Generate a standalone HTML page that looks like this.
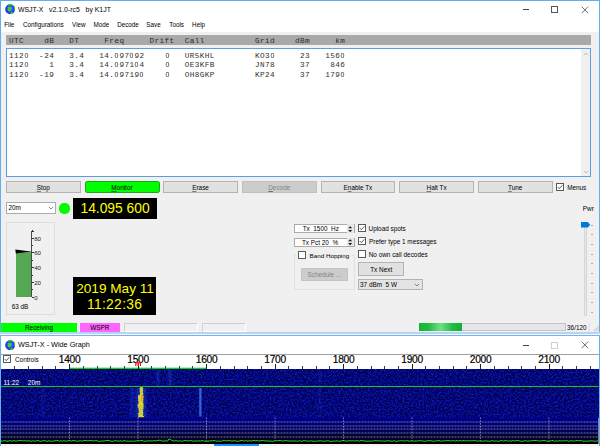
<!DOCTYPE html>
<html><head><meta charset="utf-8"><title>WSJT-X</title><style>
html,body{margin:0;padding:0;}
body{width:600px;height:446px;overflow:hidden;background:#f0f0f0;position:relative;font-family:"Liberation Sans", "DejaVu Sans", sans-serif;font-size:6.35px;color:#000;}
.a{position:absolute;}
.t{position:absolute;white-space:pre;line-height:10px;height:10px;}
.btn{position:absolute;box-sizing:border-box;background:#e1e1e1;border:0.7px solid #b4b4b4;}
.mono{font-family:"Liberation Mono", "DejaVu Sans Mono", monospace;font-size:7.7px;letter-spacing:0.405px;white-space:pre;position:absolute;left:9px;line-height:9.25px;height:9.25px;color:#303030;}
.mono i{font-style:normal;font-family:"Liberation Sans", "DejaVu Sans", sans-serif;display:inline-block;width:5.025px;letter-spacing:0;text-align:center;font-size:7.4px;transform:scaleX(0.96);}
.cb{position:absolute;box-sizing:border-box;width:8.4px;height:8.4px;background:#fff;border:0.7px solid #5a5a5a;}
.sp{position:absolute;box-sizing:border-box;background:#fff;border:0.7px solid #9a9a9a;}
u{text-decoration:underline;text-decoration-thickness:1px;text-underline-offset:0.5px;text-decoration-color:rgba(0,0,0,0.45);}
</style></head><body>
<div class="a" style="left:0;top:0;width:600px;height:335px;background:#f0f0f0;"></div>
<div class="a" style="left:0;top:0;width:600px;height:31.5px;background:#fff;"></div>
<div class="a" style="left:0;top:0;width:600px;height:0.75px;background:#66adeb;"></div>
<div class="a" style="left:0;top:0;width:0.9px;height:332px;background:#66adeb;"></div>
<div class="a" style="left:599.1px;top:0;width:0.9px;height:332px;background:#66adeb;"></div>
<div class="a" style="left:0;top:332px;width:600px;height:2px;background:#b6d5f1;"></div><div class="a" style="left:0;top:334px;width:600px;height:1px;background:#f2f7fd;"></div>
<svg class="a" style="left:4.9px;top:4.3px" width="10.4" height="10.4" viewBox="-0.2 -0.2 10.4 10.4"><defs><radialGradient id="gg" cx="0.55" cy="0.5" r="0.55"><stop offset="0" stop-color="#5868ff"/><stop offset="0.6" stop-color="#3434ff"/><stop offset="1" stop-color="#2c2cf0"/></radialGradient><clipPath id="gc"><circle cx="5" cy="5" r="5"/></clipPath></defs><circle cx="5" cy="5" r="5" fill="url(#gg)"/><g clip-path="url(#gc)" fill="#22e022"><path d="M2.3 3.3 L3.1 2.4 L4.2 2.9 L5.2 2.4 L6.5 3 L6.6 4.1 L5.9 5.5 L5.2 6.7 L4 7.3 L3 6.8 L2.3 5.6 L2.5 4.4Z"/><path d="M3 0.9 Q5.5 -1 8 1.2 Q5.5 0.7 3 0.9Z" stroke="#22e022" stroke-width="0.7"/><path d="M8.7 1.8 Q11 4 9.6 6.4 Q9.2 4 8.7 1.8Z" stroke="#22e022" stroke-width="0.5"/><ellipse cx="6.4" cy="8.7" rx="1.5" ry="1"/></g></svg>
<div class="t" style="left:18.00px;top:5.07px;font-size:6.92px;">WSJT-X   v2.1.0-rc5   by K1JT</div>
<div class="a" style="left:522.6px;top:9.1px;width:6.6px;height:0.8px;background:#444;"></div>
<div class="a" style="left:551.2px;top:6.2px;width:6.8px;height:6.8px;box-sizing:border-box;border:0.8px solid #555;"></div>
<svg class="a" style="left:580.6px;top:6px" width="8" height="8" viewBox="0 0 8 8"><path d="M0.6 0.6L7.2 7.2M7.2 0.6L0.6 7.2" stroke="#333" stroke-width="0.7" fill="none"/></svg>
<div class="t" style="left:4.22px;top:20.06px;font-size:6.30px;">File</div>
<div class="t" style="left:23.06px;top:20.06px;font-size:6.30px;">Configurations</div>
<div class="t" style="left:72.10px;top:20.06px;font-size:6.30px;">View</div>
<div class="t" style="left:93.62px;top:20.06px;font-size:6.30px;">Mode</div>
<div class="t" style="left:117.14px;top:20.06px;font-size:6.30px;">Decode</div>
<div class="t" style="left:146.37px;top:20.06px;font-size:6.30px;">Save</div>
<div class="t" style="left:169.25px;top:20.06px;font-size:6.30px;">Tools</div>
<div class="t" style="left:192.10px;top:20.06px;font-size:6.30px;">Help</div>
<div class="a" style="left:6px;top:35.3px;width:584.6px;height:10.1px;background:#a9a9a9;"></div>
<div class="mono" style="top:37.4px;color:#2a2a2a;">UTC    dB   DT     Freq     Drift  Call          Grid    dBm     km</div>
<div class="a" style="left:6px;top:48px;width:584.5px;height:129px;box-sizing:border-box;background:#fff;border:0.9px solid #5a9fe0;"></div>
<div class="a" style="left:581px;top:49px;width:8.6px;height:127px;background:#f0f0f0;"></div>
<svg class="a" style="left:582.5px;top:52px" width="6" height="4" viewBox="0 0 6 4"><path d="M0.8 3.2L3 1L5.2 3.2" stroke="#b0b0b0" stroke-width="0.8" fill="none"/></svg>
<svg class="a" style="left:582.5px;top:170px" width="6" height="4" viewBox="0 0 6 4"><path d="M0.8 0.8L3 3L5.2 0.8" stroke="#b0b0b0" stroke-width="0.8" fill="none"/></svg>
<div class="mono" style="top:51.40px;">112<i>0</i>  -24   3.4   14.<i>0</i>97<i>0</i>92    <i>0</i>   UR5KHL        KO3<i>0</i>     23   156<i>0</i></div>
<div class="mono" style="top:60.40px;">112<i>0</i>    1   3.4   14.<i>0</i>971<i>0</i>4    <i>0</i>   OE3KFB        JN78     37    846</div>
<div class="mono" style="top:69.90px;">112<i>0</i>  -19   3.4   14.<i>0</i>9719<i>0</i>    <i>0</i>   OH8GKP        KP24     37   179<i>0</i></div>
<div class="btn" style="left:5.90px;top:181.4px;width:74.7px;height:12px;"></div>
<div class="t" style="left:36.67px;top:183.26px;font-size:6.40px;"><u>S</u>top</div>
<div class="btn" style="left:84.6px;top:181px;width:75.3px;height:12.4px;background:#00ff00;border:1px solid #22a022;border-radius:2.2px;"></div>
<div class="t" style="left:111.25px;top:183.26px;font-size:6.40px;"><u>M</u>onitor</div>
<div class="btn" style="left:163.24px;top:181.4px;width:74.7px;height:12px;"></div>
<div class="t" style="left:192.23px;top:183.26px;font-size:6.40px;"><u>E</u>rase</div>
<div class="btn" style="left:241.91px;top:181.4px;width:74.7px;height:12px;background:#cccccc;border-color:#bfbfbf;"></div>
<div class="t" style="left:268.23px;top:183.26px;font-size:6.40px;color:#838383;"><u>D</u>ecode</div>
<div class="btn" style="left:320.58px;top:181.4px;width:74.7px;height:12px;"></div>
<div class="t" style="left:343.58px;top:183.26px;font-size:6.40px;">E<u>n</u>able Tx</div>
<div class="btn" style="left:399.25px;top:181.4px;width:74.7px;height:12px;"></div>
<div class="t" style="left:426.52px;top:183.26px;font-size:6.40px;"><u>H</u>alt Tx</div>
<div class="btn" style="left:477.92px;top:181.4px;width:74.7px;height:12px;"></div>
<div class="t" style="left:508.09px;top:183.26px;font-size:6.40px;"><u>T</u>une</div>
<div class="cb" style="left:556.2px;top:183.3px;width:7.9px;height:7.9px;"></div><svg class="a" style="left:556.2px;top:183.3px" width="7.9" height="7.9" viewBox="0 0 8.4 8.4"><path d="M1.8 4.3L3.5 6L6.8 2.4" stroke="#222" stroke-width="0.8" fill="none"/></svg>
<div class="t" style="left:567.14px;top:183.26px;font-size:6.40px;">Menus</div>
<div class="sp" style="left:6px;top:202px;width:50px;height:11.7px;border-color:#acacac;"></div>
<div class="t" style="left:8.50px;top:203.46px;font-size:6.40px;">20m</div>
<svg class="a" style="left:47.5px;top:206px" width="6" height="4" viewBox="0 0 6 4"><path d="M0.8 0.8L3 3L5.2 0.8" stroke="#555" stroke-width="0.7" fill="none"/></svg>
<div class="a" style="left:59.2px;top:202.6px;width:11px;height:11px;border-radius:44%;background:#00ff00;"></div>
<div class="a" style="left:73px;top:197.5px;width:83.7px;height:21.3px;background:#000;"></div>
<div class="t" style="left:80.50px;top:203.74px;font-size:13.80px;color:#ffff00;">14.095 600</div>
<div class="a" style="left:6.3px;top:222px;width:49px;height:93px;box-sizing:border-box;border:0.75px solid #dcdcdc;"></div>
<div class="a" style="left:16px;top:250.5px;width:15.2px;height:46.3px;background:#54a854;"></div>
<svg class="a" style="left:15.4px;top:248px" width="17" height="6" viewBox="0 0 17 6"><path d="M0.3 1.6L15.5 3.6L0.8 5.4Z" fill="#000"/></svg>
<div class="a" style="left:31px;top:231px;width:0.8px;height:66.3px;background:#4a4a4a;"></div>
<div class="a" style="left:31.6px;top:296.65px;width:2.4px;height:0.7px;background:#333;"></div>
<div class="t" style="left:34.20px;top:292.66px;font-size:6.10px;color:#222;">0</div>
<div class="a" style="left:31.6px;top:289.27px;width:1.6px;height:0.7px;background:#333;"></div>
<div class="a" style="left:31.6px;top:281.90px;width:2.4px;height:0.7px;background:#333;"></div>
<div class="t" style="left:34.20px;top:277.91px;font-size:6.10px;color:#222;">20</div>
<div class="a" style="left:31.6px;top:274.52px;width:1.6px;height:0.7px;background:#333;"></div>
<div class="a" style="left:31.6px;top:267.15px;width:2.4px;height:0.7px;background:#333;"></div>
<div class="t" style="left:34.20px;top:263.16px;font-size:6.10px;color:#222;">40</div>
<div class="a" style="left:31.6px;top:259.77px;width:1.6px;height:0.7px;background:#333;"></div>
<div class="a" style="left:31.6px;top:252.40px;width:2.4px;height:0.7px;background:#333;"></div>
<div class="t" style="left:34.20px;top:248.41px;font-size:6.10px;color:#222;">60</div>
<div class="a" style="left:31.6px;top:245.03px;width:1.6px;height:0.7px;background:#333;"></div>
<div class="a" style="left:31.6px;top:237.65px;width:2.4px;height:0.7px;background:#333;"></div>
<div class="t" style="left:34.20px;top:233.66px;font-size:6.10px;color:#222;">80</div>
<div class="a" style="left:31.6px;top:230.28px;width:1.6px;height:0.7px;background:#333;"></div>
<div class="a" style="left:31.6px;top:230.8px;width:2.4px;height:0.7px;background:#333;"></div>
<div class="t" style="left:11.64px;top:301.66px;font-size:6.40px;">63 dB</div>
<div class="a" style="left:73.3px;top:276.8px;width:83px;height:38.2px;background:#000;"></div>
<div class="t" style="left:76.20px;top:283.64px;font-size:13.62px;color:#ffff00;">2019 May 11</div>
<div class="t" style="left:86.90px;top:300.24px;font-size:13.80px;color:#ffff00;letter-spacing:0.35px;">11:22:36</div>
<div class="sp" style="left:294px;top:223.6px;width:60.6px;height:9.8px;border-color:#ababab;"></div><div class="a" style="left:347.0px;top:224.4px;width:6.9px;height:8.2px;background:#e6e6e6;"></div><svg class="a" style="left:348.4px;top:225.5px" width="4.4" height="6.4" viewBox="0 0 4.4 6.4"><path d="M0.2 2.3L2.2 0.2L4.2 2.3Z M0.2 4.1L2.2 6.2L4.2 4.1Z" fill="#1a1a1a"/></svg>
<div class="t" style="left:302.66px;top:224.46px;font-size:6.40px;">Tx  1500  Hz</div>
<div class="sp" style="left:294px;top:237.5px;width:60.6px;height:9.8px;border-color:#ababab;"></div><div class="a" style="left:347.0px;top:238.3px;width:6.9px;height:8.2px;background:#e6e6e6;"></div><svg class="a" style="left:348.4px;top:239.4px" width="4.4" height="6.4" viewBox="0 0 4.4 6.4"><path d="M0.2 2.3L2.2 0.2L4.2 2.3Z M0.2 4.1L2.2 6.2L4.2 4.1Z" fill="#1a1a1a"/></svg>
<div class="t" style="left:301.91px;top:238.06px;font-size:6.40px;">Tx Pct 20  %</div>
<div class="a" style="left:294.2px;top:255.2px;width:60.8px;height:34.6px;box-sizing:border-box;border:0.75px solid #e2e2e2;"></div>
<div class="a" style="left:296px;top:251px;width:56px;height:9px;background:#f0f0f0;"></div>
<div class="cb" style="left:298px;top:251px;width:7.9px;height:7.9px;"></div>
<div class="t" style="left:309.60px;top:251.06px;font-size:6.25px;">Band Hopping</div>
<div class="btn" style="left:300.8px;top:268.2px;width:47.6px;height:12.6px;background:#cccccc;border-color:#c4c4c4;"></div>
<div class="t" style="left:307.45px;top:270.26px;font-size:6.40px;color:#838383;">Schedule ...</div>
<div class="cb" style="left:358.2px;top:224px;width:7.9px;height:7.9px;"></div><svg class="a" style="left:358.2px;top:224px" width="7.9" height="7.9" viewBox="0 0 8.4 8.4"><path d="M1.8 4.3L3.5 6L6.8 2.4" stroke="#222" stroke-width="0.8" fill="none"/></svg>
<div class="t" style="left:368.52px;top:223.86px;font-size:6.40px;">Upload spots</div>
<div class="cb" style="left:358.2px;top:237.2px;width:7.9px;height:7.9px;"></div><svg class="a" style="left:358.2px;top:237.2px" width="7.9" height="7.9" viewBox="0 0 8.4 8.4"><path d="M1.8 4.3L3.5 6L6.8 2.4" stroke="#222" stroke-width="0.8" fill="none"/></svg>
<div class="t" style="left:369.01px;top:237.26px;font-size:6.40px;">Prefer type 1 messages</div>
<div class="cb" style="left:358.2px;top:250.2px;width:7.9px;height:7.9px;"></div>
<div class="t" style="left:368.72px;top:250.26px;font-size:6.40px;">No own call decodes</div>
<div class="btn" style="left:358.2px;top:262.4px;width:45.8px;height:13.2px;"></div>
<div class="t" style="left:370.18px;top:264.96px;font-size:6.40px;">Tx Next</div>
<div class="sp" style="left:358.2px;top:279px;width:64.8px;height:10.8px;background:#e4e4e4;border-color:#b2b2b2;"></div>
<div class="t" style="left:360.00px;top:280.46px;font-size:6.40px;">37 dBm  5 W</div>
<svg class="a" style="left:414px;top:283px" width="6" height="4" viewBox="0 0 6 4"><path d="M0.8 0.8L3 3L5.2 0.8" stroke="#555" stroke-width="0.7" fill="none"/></svg>
<div class="t" style="left:582.84px;top:204.46px;font-size:6.40px;">Pwr</div>
<div class="a" style="left:584px;top:223px;width:2.6px;height:93px;box-sizing:border-box;background:#e7eaea;border:0.5px solid #d6d6d6;"></div>
<svg class="a" style="left:581px;top:222.3px" width="10" height="6" viewBox="0 0 10 6"><path d="M0 0H6.8L9.2 2.8L6.8 5.6H0Z" fill="#0078d7"/></svg>
<div class="a" style="left:591.4px;top:224.70px;width:1.9px;height:0.8px;background:#b0b0b0;"></div>
<div class="a" style="left:591.4px;top:234.36px;width:1.9px;height:0.8px;background:#b0b0b0;"></div>
<div class="a" style="left:591.4px;top:244.02px;width:1.9px;height:0.8px;background:#b0b0b0;"></div>
<div class="a" style="left:591.4px;top:253.68px;width:1.9px;height:0.8px;background:#b0b0b0;"></div>
<div class="a" style="left:591.4px;top:263.34px;width:1.9px;height:0.8px;background:#b0b0b0;"></div>
<div class="a" style="left:591.4px;top:273.00px;width:1.9px;height:0.8px;background:#b0b0b0;"></div>
<div class="a" style="left:591.4px;top:282.66px;width:1.9px;height:0.8px;background:#b0b0b0;"></div>
<div class="a" style="left:591.4px;top:292.32px;width:1.9px;height:0.8px;background:#b0b0b0;"></div>
<div class="a" style="left:591.4px;top:301.98px;width:1.9px;height:0.8px;background:#b0b0b0;"></div>
<div class="a" style="left:591.4px;top:311.64px;width:1.9px;height:0.8px;background:#b0b0b0;"></div>
<div class="a" style="left:1.3px;top:322.7px;width:75.7px;height:8.9px;background:#00ff00;"></div>
<div class="t" style="left:25.00px;top:322.96px;font-size:6.40px;">Receiving</div>
<div class="a" style="left:80px;top:322.7px;width:40px;height:8.9px;background:#ff66ff;"></div>
<div class="t" style="left:90.15px;top:322.96px;font-size:6.40px;">WSPR</div>
<div class="a" style="left:123.5px;top:322.7px;width:74px;height:8.9px;box-sizing:border-box;border:0.75px solid #d0d0d0;border-bottom-color:#fff;border-right-color:#fff;"></div>
<div class="a" style="left:201.5px;top:322.7px;width:44.5px;height:8.9px;box-sizing:border-box;border:0.75px solid #d0d0d0;border-bottom-color:#fff;border-right-color:#fff;"></div>
<div class="a" style="left:419px;top:322.6px;width:146.6px;height:8.6px;box-sizing:border-box;background:#e6e6e6;border:0.6px solid #c6c6c6;"></div>
<div class="a" style="left:419.4px;top:323px;width:43px;height:8px;background:linear-gradient(90deg,#14b436 0%,#22bc44 22%,#6ee084 50%,#22bc44 78%,#10b030 100%);"></div>
<div class="t" style="left:567.06px;top:322.96px;font-size:6.40px;">36/120</div>
<div class="a" style="left:589.2px;top:322.5px;width:0.8px;height:9.5px;background:#dedede;"></div>
<svg class="a" style="left:592px;top:325px" width="7" height="7" viewBox="0 0 7 7"><path d="M6 0.8V6.4M4.2 2.6V6.4M2.4 4.4V6.4" stroke="#c4c4c4" stroke-width="0.9" fill="none"/></svg>
<div class="a" style="left:0;top:335px;width:600px;height:111px;background:#fff;"></div>
<div class="a" style="left:0;top:335px;width:600px;height:1px;background:#78b2e8;"></div>
<div class="a" style="left:0;top:336px;width:0.9px;height:110px;background:#66adeb;"></div>
<div class="a" style="left:599.1px;top:336px;width:0.9px;height:110px;background:#66adeb;"></div>
<svg class="a" style="left:4.9px;top:339.8px" width="10.4" height="10.4" viewBox="-0.2 -0.2 10.4 10.4"><defs><radialGradient id="gg2" cx="0.55" cy="0.5" r="0.55"><stop offset="0" stop-color="#5868ff"/><stop offset="0.6" stop-color="#3434ff"/><stop offset="1" stop-color="#2c2cf0"/></radialGradient><clipPath id="gc2"><circle cx="5" cy="5" r="5"/></clipPath></defs><circle cx="5" cy="5" r="5" fill="url(#gg2)"/><g clip-path="url(#gc2)" fill="#22e022"><path d="M2.3 3.3 L3.1 2.4 L4.2 2.9 L5.2 2.4 L6.5 3 L6.6 4.1 L5.9 5.5 L5.2 6.7 L4 7.3 L3 6.8 L2.3 5.6 L2.5 4.4Z"/><path d="M3 0.9 Q5.5 -1 8 1.2 Q5.5 0.7 3 0.9Z" stroke="#22e022" stroke-width="0.7"/><path d="M8.7 1.8 Q11 4 9.6 6.4 Q9.2 4 8.7 1.8Z" stroke="#22e022" stroke-width="0.5"/><ellipse cx="6.4" cy="8.7" rx="1.5" ry="1"/></g></svg>
<div class="t" style="left:18.00px;top:340.27px;font-size:7.28px;">WSJT-X - Wide Graph</div>
<div class="a" style="left:522.6px;top:344.6px;width:6.6px;height:0.8px;background:#444;"></div>
<div class="a" style="left:551px;top:341.5px;width:7px;height:7px;box-sizing:border-box;border:0.8px solid #cfcfcf;"></div>
<svg class="a" style="left:580.6px;top:341.3px" width="8" height="8" viewBox="0 0 8 8"><path d="M0.6 0.6L7.2 7.2M7.2 0.6L0.6 7.2" stroke="#333" stroke-width="0.7" fill="none"/></svg>
<div class="a" style="left:1px;top:354px;width:598px;height:0.8px;background:#a0a0a0;"></div>
<div class="cb" style="left:3.4px;top:355.2px;width:7.9px;height:7.9px;"></div><svg class="a" style="left:3.4px;top:355.2px" width="7.9" height="7.9" viewBox="0 0 8.4 8.4"><path d="M1.8 4.3L3.5 6L6.8 2.4" stroke="#222" stroke-width="0.8" fill="none"/></svg>
<div class="t" style="left:14.98px;top:354.66px;font-size:6.40px;">Controls</div>
<div class="t" style="left:58.80px;top:355.10px;font-size:10.20px;color:#000;letter-spacing:-0.3px;-webkit-text-stroke:0.2px #000;">1400</div>
<div class="t" style="left:127.30px;top:355.10px;font-size:10.20px;color:#000;letter-spacing:-0.3px;-webkit-text-stroke:0.2px #000;">1500</div>
<div class="t" style="left:195.80px;top:355.10px;font-size:10.20px;color:#000;letter-spacing:-0.3px;-webkit-text-stroke:0.2px #000;">1600</div>
<div class="t" style="left:264.30px;top:355.10px;font-size:10.20px;color:#000;letter-spacing:-0.3px;-webkit-text-stroke:0.2px #000;">1700</div>
<div class="t" style="left:332.80px;top:355.10px;font-size:10.20px;color:#000;letter-spacing:-0.3px;-webkit-text-stroke:0.2px #000;">1800</div>
<div class="t" style="left:401.30px;top:355.10px;font-size:10.20px;color:#000;letter-spacing:-0.3px;-webkit-text-stroke:0.2px #000;">1900</div>
<div class="t" style="left:469.80px;top:355.10px;font-size:10.20px;color:#000;letter-spacing:-0.3px;-webkit-text-stroke:0.2px #000;">2000</div>
<div class="t" style="left:538.30px;top:355.10px;font-size:10.20px;color:#000;letter-spacing:-0.3px;-webkit-text-stroke:0.2px #000;">2100</div>
<div class="a" style="left:69.5px;top:367px;width:137.5px;height:1px;background:rgba(0,224,0,0.32);"></div>
<div class="a" style="left:69.5px;top:368px;width:137.5px;height:1px;background:#00e000;"></div>
<div class="a" style="left:14.35px;top:366px;width:0.7px;height:2.8px;background:#3a3a3a;"></div>
<div class="a" style="left:28.05px;top:366px;width:0.7px;height:2.8px;background:#3a3a3a;"></div>
<div class="a" style="left:41.75px;top:366px;width:0.7px;height:2.8px;background:#3a3a3a;"></div>
<div class="a" style="left:55.45px;top:366px;width:0.7px;height:2.8px;background:#3a3a3a;"></div>
<div class="a" style="left:69.10px;top:364.3px;width:0.8px;height:4.5px;background:#222;"></div>
<div class="a" style="left:82.85px;top:366px;width:0.7px;height:2.8px;background:#3a3a3a;"></div>
<div class="a" style="left:96.55px;top:366px;width:0.7px;height:2.8px;background:#3a3a3a;"></div>
<div class="a" style="left:110.25px;top:366px;width:0.7px;height:2.8px;background:#3a3a3a;"></div>
<div class="a" style="left:123.95px;top:366px;width:0.7px;height:2.8px;background:#3a3a3a;"></div>
<div class="a" style="left:137.60px;top:364.3px;width:0.8px;height:4.5px;background:#222;"></div>
<div class="a" style="left:151.35px;top:366px;width:0.7px;height:2.8px;background:#3a3a3a;"></div>
<div class="a" style="left:165.05px;top:366px;width:0.7px;height:2.8px;background:#3a3a3a;"></div>
<div class="a" style="left:178.75px;top:366px;width:0.7px;height:2.8px;background:#3a3a3a;"></div>
<div class="a" style="left:192.45px;top:366px;width:0.7px;height:2.8px;background:#3a3a3a;"></div>
<div class="a" style="left:206.10px;top:364.3px;width:0.8px;height:4.5px;background:#222;"></div>
<div class="a" style="left:219.85px;top:366px;width:0.7px;height:2.8px;background:#3a3a3a;"></div>
<div class="a" style="left:233.55px;top:366px;width:0.7px;height:2.8px;background:#3a3a3a;"></div>
<div class="a" style="left:247.25px;top:366px;width:0.7px;height:2.8px;background:#3a3a3a;"></div>
<div class="a" style="left:260.95px;top:366px;width:0.7px;height:2.8px;background:#3a3a3a;"></div>
<div class="a" style="left:274.60px;top:364.3px;width:0.8px;height:4.5px;background:#222;"></div>
<div class="a" style="left:288.35px;top:366px;width:0.7px;height:2.8px;background:#3a3a3a;"></div>
<div class="a" style="left:302.05px;top:366px;width:0.7px;height:2.8px;background:#3a3a3a;"></div>
<div class="a" style="left:315.75px;top:366px;width:0.7px;height:2.8px;background:#3a3a3a;"></div>
<div class="a" style="left:329.45px;top:366px;width:0.7px;height:2.8px;background:#3a3a3a;"></div>
<div class="a" style="left:343.10px;top:364.3px;width:0.8px;height:4.5px;background:#222;"></div>
<div class="a" style="left:356.85px;top:366px;width:0.7px;height:2.8px;background:#3a3a3a;"></div>
<div class="a" style="left:370.55px;top:366px;width:0.7px;height:2.8px;background:#3a3a3a;"></div>
<div class="a" style="left:384.25px;top:366px;width:0.7px;height:2.8px;background:#3a3a3a;"></div>
<div class="a" style="left:397.95px;top:366px;width:0.7px;height:2.8px;background:#3a3a3a;"></div>
<div class="a" style="left:411.60px;top:364.3px;width:0.8px;height:4.5px;background:#222;"></div>
<div class="a" style="left:425.35px;top:366px;width:0.7px;height:2.8px;background:#3a3a3a;"></div>
<div class="a" style="left:439.05px;top:366px;width:0.7px;height:2.8px;background:#3a3a3a;"></div>
<div class="a" style="left:452.75px;top:366px;width:0.7px;height:2.8px;background:#3a3a3a;"></div>
<div class="a" style="left:466.45px;top:366px;width:0.7px;height:2.8px;background:#3a3a3a;"></div>
<div class="a" style="left:480.10px;top:364.3px;width:0.8px;height:4.5px;background:#222;"></div>
<div class="a" style="left:493.85px;top:366px;width:0.7px;height:2.8px;background:#3a3a3a;"></div>
<div class="a" style="left:507.55px;top:366px;width:0.7px;height:2.8px;background:#3a3a3a;"></div>
<div class="a" style="left:521.25px;top:366px;width:0.7px;height:2.8px;background:#3a3a3a;"></div>
<div class="a" style="left:534.95px;top:366px;width:0.7px;height:2.8px;background:#3a3a3a;"></div>
<div class="a" style="left:548.60px;top:364.3px;width:0.8px;height:4.5px;background:#222;"></div>
<div class="a" style="left:562.35px;top:366px;width:0.7px;height:2.8px;background:#3a3a3a;"></div>
<div class="a" style="left:576.05px;top:366px;width:0.7px;height:2.8px;background:#3a3a3a;"></div>
<div class="a" style="left:589.75px;top:366px;width:0.7px;height:2.8px;background:#3a3a3a;"></div>
<svg class="a" style="left:135px;top:361.8px" width="6.4" height="4.2" viewBox="0 0 6.4 4.2"><path d="M0.8 4.2V1.9Q0.8 0.7 2 0.7Q3.2 0.7 3.2 1.9V4.2M3.2 1.9Q3.2 0.7 4.4 0.7Q5.6 0.7 5.6 1.9V4.2" stroke="#ff1010" stroke-width="1.25" fill="none"/></svg>
<svg class="a" style="left:1px;top:369px" width="597.5" height="49" viewBox="0 0 597.5 49"><defs><filter id="nz" x="0" y="0" width="100%" height="100%" color-interpolation-filters="sRGB"><feTurbulence type="fractalNoise" baseFrequency="0.55 0.6" numOctaves="2" seed="5" result="t"/><feColorMatrix in="t" type="matrix" values="0.1 0 0 0 -0.035  0.26 0 0 0 -0.1  1.12 0 0 0 -0.08  0 0 0 0 1"/></filter><filter id="b1" x="-50%" y="-10%" width="200%" height="120%"><feGaussianBlur stdDeviation="1.2 0.6"/></filter><filter id="b2" x="-50%" y="-10%" width="200%" height="120%"><feGaussianBlur stdDeviation="0.5 0.3"/></filter></defs><rect y="0.3" width="597.5" height="48.7" fill="#050a88"/><rect y="0.3" width="597.5" height="48.7" filter="url(#nz)"/><rect x="155.9" y="1.0" width="2.2" height="16.0" fill="#3060ff" opacity="0.32" filter="url(#b1)"/><rect x="167.9" y="1.0" width="2.2" height="16.0" fill="#3060ff" opacity="0.42" filter="url(#b1)"/><rect x="129.8" y="19.0" width="2.5" height="29.0" fill="#2858f0" opacity="0.32" filter="url(#b1)"/><rect x="134.3" y="19.0" width="11" height="29.5" fill="#2050e8" opacity="0.4" filter="url(#b1)"/><rect x="198.2" y="19.0" width="2.3" height="28.5" fill="#4684ff" opacity="0.72" filter="url(#b2)"/><rect x="41.2" y="19.0" width="1.5" height="29.0" fill="#2858f0" opacity="0.25" filter="url(#b1)"/><rect x="318.3" y="0.5" width="1.4" height="47.5" fill="#2858f0" opacity="0.3" filter="url(#b1)"/><rect x="138.8" y="18.2" width="3.2" height="1.05" fill="#e8e028"/><rect x="138.7" y="19.2" width="3.5" height="1.05" fill="#f0e820"/><rect x="138.6" y="20.2" width="3.1" height="1.05" fill="#fcf420"/><rect x="139.4" y="21.2" width="2.7" height="1.05" fill="#ffff30"/><rect x="138.6" y="22.2" width="3.1" height="1.05" fill="#f8f020"/><rect x="139.0" y="23.2" width="3.0" height="1.05" fill="#e8e028"/><rect x="139.0" y="24.2" width="3.2" height="1.05" fill="#f0e820"/><rect x="138.8" y="25.2" width="3.4" height="1.05" fill="#f8f020"/><rect x="137.1" y="26.2" width="4.5" height="1.05" fill="#f0e820"/><rect x="137.1" y="27.2" width="5.5" height="1.05" fill="#ffff30"/><rect x="136.9" y="28.2" width="5.6" height="1.05" fill="#fcf420"/><rect x="137.2" y="29.2" width="4.7" height="1.05" fill="#f8f020"/><rect x="137.4" y="30.2" width="5.0" height="1.05" fill="#ffff30"/><rect x="137.1" y="31.2" width="5.1" height="1.05" fill="#f8f020"/><rect x="137.6" y="32.2" width="4.7" height="1.05" fill="#f0e820"/><rect x="137.6" y="33.2" width="4.3" height="1.05" fill="#fcf420"/><rect x="137.5" y="34.2" width="4.9" height="1.05" fill="#ffff30"/><rect x="136.7" y="35.2" width="5.8" height="1.05" fill="#f8f020"/><rect x="136.6" y="36.2" width="5.8" height="1.05" fill="#f8f020"/><rect x="136.8" y="37.2" width="5.9" height="1.05" fill="#e8e028"/><rect x="137.1" y="38.2" width="5.2" height="1.05" fill="#f0e820"/><rect x="137.7" y="39.2" width="4.7" height="1.05" fill="#f8f020"/><rect x="137.5" y="40.2" width="4.2" height="1.05" fill="#e8e028"/><rect x="137.8" y="41.2" width="4.4" height="1.05" fill="#f0e820"/><rect x="137.8" y="42.2" width="4.2" height="1.05" fill="#e8e028"/><rect x="137.8" y="43.2" width="4.5" height="1.05" fill="#fcf420"/><rect x="136.9" y="44.2" width="5.1" height="1.05" fill="#f0e820"/><rect x="137.3" y="45.2" width="4.9" height="1.05" fill="#e8e028"/><rect x="137.4" y="46.2" width="4.6" height="1.05" fill="#ffff30"/><rect x="137.1" y="47.2" width="5.9" height="1.05" fill="#fcf420"/><rect x="139.9" y="26.5" width="1.6" height="6" fill="#ff8a10" opacity="0.85" filter="url(#b2)"/><rect x="0" y="17" width="597.5" height="1" fill="#1ec02a"/><rect x="0" y="16.7" width="597.5" height="1.6" fill="#1ec02a" opacity="0.12"/></svg>
<div class="t" style="left:3.50px;top:378.06px;font-size:6.45px;color:#fff;word-spacing:1.1px;">11:22   20m</div>
<svg class="a" style="left:1px;top:417px" width="597.5" height="27" viewBox="0 -0.5 597.5 27"><defs><linearGradient id="sg" x1="0" y1="0" x2="0" y2="1"><stop offset="0" stop-color="#00008e"/><stop offset="0.5" stop-color="#000058"/><stop offset="0.86" stop-color="#000014"/><stop offset="0.87" stop-color="#000"/><stop offset="1" stop-color="#000"/></linearGradient></defs><rect y="0.2" width="597.5" height="26.3" fill="url(#sg)"/><path d="M0.5 4.5H597.5" stroke="#c4c4dc" stroke-opacity="0.6" stroke-width="1" stroke-dasharray="2 1" fill="none"/><path d="M0.5 8.5H597.5" stroke="#c4c4dc" stroke-opacity="0.6" stroke-width="1" stroke-dasharray="2 1" fill="none"/><path d="M0.5 11.5H597.5" stroke="#c4c4dc" stroke-opacity="0.6" stroke-width="1" stroke-dasharray="2 1" fill="none"/><path d="M0.5 15.5H597.5" stroke="#c4c4dc" stroke-opacity="0.6" stroke-width="1" stroke-dasharray="2 1" fill="none"/><path d="M0.5 19.5H597.5" stroke="#c4c4dc" stroke-opacity="0.6" stroke-width="1" stroke-dasharray="2 1" fill="none"/><path d="M68.5 0V23.5" stroke="#d0d0e0" stroke-opacity="0.7" stroke-width="0.8" stroke-dasharray="1.6 1.2" fill="none"/><path d="M137.0 0V23.5" stroke="#d0d0e0" stroke-opacity="0.7" stroke-width="0.8" stroke-dasharray="1.6 1.2" fill="none"/><path d="M205.5 0V23.5" stroke="#d0d0e0" stroke-opacity="0.7" stroke-width="0.8" stroke-dasharray="1.6 1.2" fill="none"/><path d="M274.0 0V23.5" stroke="#d0d0e0" stroke-opacity="0.7" stroke-width="0.8" stroke-dasharray="1.6 1.2" fill="none"/><path d="M342.5 0V23.5" stroke="#d0d0e0" stroke-opacity="0.7" stroke-width="0.8" stroke-dasharray="1.6 1.2" fill="none"/><path d="M411.0 0V23.5" stroke="#d0d0e0" stroke-opacity="0.7" stroke-width="0.8" stroke-dasharray="1.6 1.2" fill="none"/><path d="M479.5 0V23.5" stroke="#d0d0e0" stroke-opacity="0.7" stroke-width="0.8" stroke-dasharray="1.6 1.2" fill="none"/><path d="M548.0 0V23.5" stroke="#d0d0e0" stroke-opacity="0.7" stroke-width="0.8" stroke-dasharray="1.6 1.2" fill="none"/><polyline points="0.0,23.22 1.5,23.75 3.0,23.14 4.5,23.30 6.0,23.72 7.5,23.53 9.0,23.04 10.5,23.84 12.0,23.14 13.5,23.18 15.0,23.65 16.5,23.25 18.0,23.22 19.5,23.02 21.0,23.03 22.5,23.47 24.0,23.17 25.5,23.49 27.0,23.28 28.5,23.36 30.0,23.81 31.5,23.39 33.0,23.47 34.5,23.73 36.0,23.11 37.5,23.09 39.0,23.77 40.5,23.69 42.0,23.17 43.5,23.12 45.0,23.62 46.5,23.80 48.0,23.13 49.5,23.81 51.0,23.74 52.5,23.49 54.0,23.33 55.5,23.04 57.0,22.98 58.5,23.82 60.0,23.16 61.5,23.58 63.0,23.18 64.5,23.69 66.0,23.49 67.5,23.21 69.0,23.11 70.5,23.60 72.0,23.01 73.5,23.16 75.0,23.45 76.5,23.72 78.0,23.50 79.5,23.20 81.0,23.78 82.5,23.13 84.0,22.96 85.5,23.19 87.0,23.35 88.5,23.00 90.0,23.11 91.5,23.28 93.0,23.46 94.5,23.07 96.0,23.28 97.5,23.75 99.0,23.83 100.5,23.54 102.0,23.57 103.5,23.48 105.0,23.08 106.5,22.98 108.0,22.97 109.5,23.77 111.0,23.58 112.5,23.82 114.0,22.97 115.5,23.52 117.0,23.38 118.5,23.61 120.0,23.24 121.5,23.85 123.0,23.02 124.5,23.44 126.0,23.61 127.5,23.76 129.0,23.61 130.5,23.58 132.0,23.66 133.5,23.77 135.0,23.27 136.5,23.57 138.0,23.26 139.5,23.23 141.0,22.83 142.5,23.66 144.0,23.73 145.5,23.47 147.0,23.51 148.5,23.29 150.0,23.47 151.5,23.50 153.0,23.02 154.5,23.53 156.0,22.94 157.5,22.84 159.0,22.71 160.5,23.30 162.0,23.61 163.5,23.47 165.0,23.35 166.5,23.70 168.0,21.43 169.5,22.03 171.0,22.98 172.5,23.49 174.0,23.38 175.5,23.16 177.0,23.58 178.5,23.40 180.0,23.50 181.5,23.78 183.0,23.18 184.5,22.96 186.0,23.22 187.5,23.56 189.0,23.13 190.5,23.10 192.0,23.77 193.5,23.54 195.0,23.35 196.5,23.75 198.0,23.24 199.5,23.55 201.0,23.13 202.5,23.34 204.0,23.68 205.5,23.77 207.0,23.74 208.5,23.30 210.0,23.47 211.5,23.23 213.0,23.07 214.5,23.40 216.0,23.70 217.5,23.71 219.0,23.59 220.5,23.81 222.0,23.20 223.5,23.10 225.0,23.36 226.5,23.20 228.0,23.14 229.5,23.32 231.0,23.51 232.5,23.39 234.0,23.23 235.5,23.71 237.0,23.83 238.5,23.36 240.0,23.02 241.5,22.98 243.0,23.74 244.5,22.99 246.0,23.59 247.5,23.46 249.0,23.23 250.5,23.66 252.0,22.97 253.5,23.07 255.0,23.36 256.5,22.97 258.0,23.70 259.5,23.16 261.0,23.08 262.5,22.99 264.0,23.52 265.5,23.35 267.0,23.52 268.5,23.54 270.0,23.68 271.5,23.81 273.0,23.57 274.5,23.13 276.0,23.38 277.5,23.11 279.0,22.96 280.5,23.37 282.0,23.59 283.5,23.11 285.0,23.20 286.5,23.26 288.0,23.58 289.5,23.42 291.0,23.50 292.5,23.63 294.0,23.30 295.5,23.66 297.0,23.77 298.5,23.03 300.0,23.79 301.5,23.60 303.0,23.07 304.5,23.36 306.0,23.51 307.5,23.77 309.0,23.29 310.5,23.46 312.0,23.74 313.5,23.67 315.0,23.80 316.5,23.37 318.0,23.54 319.5,23.13 321.0,23.60 322.5,23.69 324.0,23.53 325.5,23.60 327.0,23.14 328.5,23.76 330.0,23.83 331.5,23.83 333.0,23.43 334.5,23.66 336.0,23.24 337.5,23.77 339.0,23.72 340.5,23.26 342.0,23.02 343.5,23.35 345.0,23.45 346.5,23.64 348.0,23.39 349.5,22.98 351.0,23.68 352.5,23.01 354.0,23.67 355.5,23.11 357.0,23.25 358.5,23.66 360.0,23.08 361.5,23.08 363.0,23.41 364.5,23.60 366.0,23.71 367.5,23.57 369.0,23.80 370.5,23.39 372.0,23.80 373.5,23.03 375.0,23.15 376.5,23.42 378.0,23.21 379.5,23.61 381.0,23.52 382.5,23.42 384.0,23.71 385.5,23.45 387.0,23.23 388.5,23.29 390.0,23.71 391.5,23.76 393.0,23.14 394.5,23.72 396.0,23.82 397.5,23.42 399.0,23.47 400.5,23.13 402.0,23.43 403.5,23.40 405.0,23.49 406.5,22.97 408.0,23.82 409.5,23.41 411.0,23.31 412.5,23.67 414.0,23.46 415.5,23.39 417.0,23.57 418.5,23.01 420.0,23.43 421.5,23.32 423.0,23.81 424.5,23.78 426.0,23.19 427.5,23.38 429.0,23.06 430.5,23.34 432.0,23.68 433.5,23.76 435.0,23.38 436.5,23.24 438.0,23.12 439.5,23.51 441.0,23.78 442.5,23.07 444.0,23.65 445.5,22.97 447.0,23.12 448.5,23.15 450.0,23.57 451.5,23.24 453.0,23.27 454.5,23.51 456.0,23.04 457.5,23.61 459.0,23.06 460.5,23.41 462.0,23.18 463.5,23.13 465.0,23.43 466.5,23.34 468.0,23.29 469.5,23.32 471.0,23.43 472.5,23.09 474.0,23.13 475.5,23.52 477.0,23.52 478.5,23.43 480.0,23.72 481.5,23.50 483.0,23.72 484.5,23.16 486.0,23.62 487.5,23.68 489.0,23.76 490.5,23.23 492.0,23.23 493.5,23.78 495.0,23.15 496.5,23.85 498.0,23.75 499.5,23.07 501.0,23.17 502.5,23.60 504.0,23.18 505.5,23.04 507.0,23.70 508.5,23.33 510.0,23.66 511.5,23.06 513.0,23.31 514.5,23.57 516.0,22.97 517.5,23.13 519.0,23.56 520.5,23.77 522.0,23.82 523.5,23.05 525.0,23.41 526.5,23.63 528.0,23.40 529.5,23.57 531.0,23.12 532.5,23.01 534.0,23.05 535.5,22.98 537.0,23.45 538.5,23.41 540.0,23.46 541.5,23.08 543.0,23.12 544.5,23.13 546.0,23.71 547.5,23.84 549.0,23.78 550.5,23.04 552.0,23.01 553.5,23.81 555.0,23.37 556.5,23.64 558.0,23.24 559.5,23.37 561.0,23.41 562.5,23.34 564.0,23.49 565.5,22.96 567.0,23.58 568.5,23.71 570.0,23.11 571.5,23.36 573.0,23.62 574.5,23.31 576.0,23.13 577.5,23.10 579.0,23.41 580.5,22.96 582.0,23.75 583.5,23.67 585.0,23.58 586.5,23.72 588.0,23.52 589.5,23.31 591.0,23.49 592.5,23.40 594.0,23.83 595.5,23.67 597.0,23.18" stroke="#34e040" stroke-width="0.95" fill="none"/></svg>
<div class="a" style="left:1px;top:444px;width:598px;height:2px;background:#f4f4f4;"></div>
<div class="a" style="left:213.8px;top:444.4px;width:45.2px;height:1.6px;background:#1e8fff;"></div>
</body></html>
